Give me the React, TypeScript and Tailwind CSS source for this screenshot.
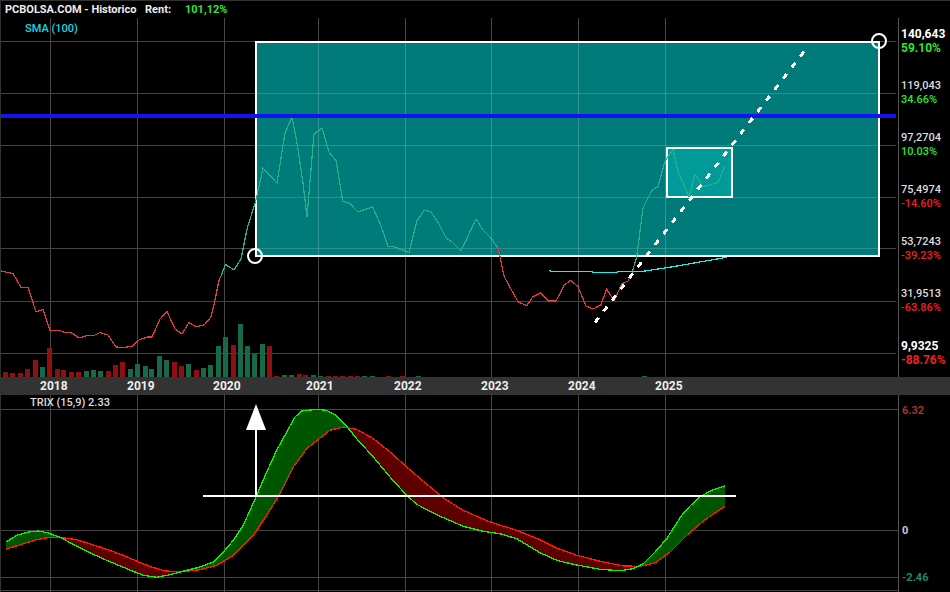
/* Monthly price chart with TRIX panel, drawn on two SVG canvases beside flow-laid axis columns. */

type Pt = readonly [number, number];

const GRID_X = [50, 137, 224, 318, 405, 491, 578, 665];
const GRID_Y = [41, 93, 145, 197, 248, 301, 353];
const TRIX_GRID_Y = [409, 530, 577, 590];

const RED_BEFORE: Pt[] = [
  [1, 271], [13, 273.5], [21, 287.5], [28, 287.5], [36, 312], [43, 309.5], [50, 330.5], [60, 330.5],
  [63, 332], [72, 333], [79, 338], [87, 335.5], [94, 335.5], [100, 332.5], [108, 335], [116, 347],
  [123, 347.5], [132, 346.5], [139, 340], [147, 337], [152, 337], [160, 319], [167, 311.5], [175, 329],
  [182, 334], [189, 322.5], [196, 327], [204, 325], [211, 317], [215, 300], [219, 280],
];
const GREEN_A: Pt[] = [
  [219, 280], [221, 276], [225.5, 264.5], [234, 270], [241, 259], [247, 229], [256, 200], [263, 168],
  [277, 183], [285, 133], [292, 117], [297, 143], [303, 183], [307, 217], [314, 134], [322, 128],
  [329, 152], [336, 160.5], [342.7, 201], [350, 203.7], [358, 212], [372.7, 207], [380.7, 225],
  [388, 246.7], [394, 246.7], [409, 252.7], [417, 220.7], [424.3, 210.3], [430.7, 211.7], [439, 224],
  [446, 238], [452, 242], [461, 251], [476, 219], [483, 230], [490, 237], [498, 248],
];
const RED_MIDDLE: Pt[] = [
  [498, 248], [500, 256.7], [503.7, 275], [506, 280], [518, 301.7], [526.7, 305.7], [533, 296.7],
  [540.7, 293], [548.7, 301], [556, 301], [564.3, 285], [570.7, 280.3], [578, 286.7], [586, 306],
  [593, 309], [600.7, 305], [606.7, 289], [614, 301], [621.7, 284], [628, 281], [632, 273],
];
const GREEN_B: Pt[] = [
  [632, 273], [636.7, 256.7], [639.3, 236.7], [643, 208], [647, 200], [651.7, 190.5], [658, 186.7],
  [665, 161], [673, 149.5], [678, 171.7], [689, 196.7], [695, 174.3], [702.7, 186.7], [718, 182.7], [725, 166],
];
const SMA: Pt[] = [
  [549.3, 270], [550.7, 271.3], [592, 271.3], [593, 272.7], [617, 272.3], [617.7, 271.3], [643, 271.3],
  [673, 266.7], [726.7, 257.3],
];

// [left, top, isGreen] of each 5px volume bar, baseline at y=377
const BARS: readonly (readonly [number, number, boolean])[] = [
  [3, 372, false], [10, 373, false], [18, 373, false], [25, 369, false], [33, 360, false], [40, 367, true],
  [47, 348, false], [55, 369, false], [61, 370, false], [69, 372, false], [76, 372, false], [84, 371, true],
  [91, 370, true], [98, 371, true], [106, 371, false], [113, 365, false], [120, 362, false], [128, 369, true],
  [135, 364, true], [143, 366, true], [149, 369, true], [157, 356, true], [164, 360, true], [172, 362, false],
  [179, 366, false], [186, 364, true], [194, 370, false], [201, 368, true], [208, 365, true], [216, 346, true],
  [223, 337, true], [231, 345, false], [238, 324, true], [245, 346, true], [252, 354, true], [260, 344, true],
  [267, 346, false], [274, 376, false], [282, 375, true], [289, 375, true], [297, 374, false], [303, 375, false],
  [311, 375, true], [318, 376, true], [326, 376, false], [333, 376, false], [340, 376, false], [348, 376, false],
  [355, 376, false], [362, 376, true], [370, 376, true], [386, 376, false], [400, 376, false], [416, 376, true],
  [642, 376, true],
];

const TRIX_GREEN: Pt[] = [
  [6, 542], [16.7, 535.3], [28.3, 532], [38.3, 531], [48.3, 533], [60, 537.3], [73.3, 544.3], [86.7, 551.3],
  [106.7, 560.3], [126.7, 568.7], [143.3, 575.3], [156.7, 577.3], [170, 574.7], [186.7, 570.3], [200, 567],
  [213.3, 562], [223.3, 552], [233.3, 540.3], [243.3, 525.3], [256.7, 495.3], [266.7, 472], [276.7, 450.3],
  [286.7, 432], [295, 417], [301.7, 411], [316.7, 409.3], [326.7, 410.3], [335, 414.7], [346.7, 426.3],
  [356.7, 438.7], [373.3, 457], [390, 477], [406.7, 495.3], [416.7, 504.3], [436.7, 514.7], [463.3, 526.3],
  [483.3, 531.3], [500, 533.7], [516.7, 538.7], [540, 552.7], [556.7, 560.3], [573.3, 564.3], [600, 569.3],
  [620, 570.7], [633.3, 568.7], [643.3, 563.7], [655, 552], [666.7, 538.7], [681.7, 515.3], [690, 506],
  [700, 497], [710, 491], [725, 485.7],
];
const TRIX_RED: Pt[] = [
  [6, 549.3], [20, 544.7], [36.7, 539.7], [50, 537.3], [60, 537.3], [76.7, 539.7], [100, 547], [123.3, 555.3],
  [146.7, 565.3], [163.3, 570.7], [180, 572], [200, 569.7], [216.7, 565.3], [233.3, 555.3], [253.3, 535.3],
  [266.7, 515.3], [280, 493.7], [293.3, 467], [306.7, 448.7], [318.3, 439.3], [330, 430.3], [343.3, 427],
  [356.7, 429.3], [373.3, 438.7], [390, 452], [406.7, 467], [423.3, 481.3], [443.3, 498], [463.3, 510.3],
  [490, 522], [516.7, 530.3], [540, 539.7], [556.7, 548], [576.7, 555.3], [600, 561.3], [623.3, 566],
  [640, 566.3], [655, 563], [670, 552], [686.7, 535.3], [703.3, 521], [725, 506],
];

const PRICE_LEVELS = [
  { value: "140,643", pct: "59.10%", up: true, strong: true },
  { value: "119,043", pct: "34.66%", up: true, strong: false },
  { value: "97,2704", pct: "10.03%", up: true, strong: false },
  { value: "75,4974", pct: "-14.60%", up: false, strong: false },
  { value: "53,7243", pct: "-39.23%", up: false, strong: false },
  { value: "31,9513", pct: "-63.86%", up: false, strong: false },
  { value: "9,9325", pct: "-88.76%", up: false, strong: true },
];

const toPoints = (pts: readonly Pt[]) => pts.map(([x, y]) => `${x},${y}`).join(" ");

function valueAt(pts: readonly Pt[], x: number): number {
  for (let i = 1; i < pts.length; i++) {
    if (x <= pts[i][0]) {
      const [x0, y0] = pts[i - 1];
      const [x1, y1] = pts[i];
      return y0 + ((y1 - y0) * (x - x0)) / (x1 - x0);
    }
  }
  return pts[pts.length - 1][1];
}

// Split the band between both TRIX lines into runs, by which line is on top
function trixBands() {
  const bands: { up: boolean; points: string }[] = [];
  let top: Pt[] = [];
  let bottom: Pt[] = [];
  let up = true;
  const flush = () => {
    if (top.length > 1) bands.push({ up, points: toPoints([...top, ...bottom.reverse()]) });
  };
  for (let x = 6; x <= 725; x++) {
    const g = valueAt(TRIX_GREEN, x);
    const r = valueAt(TRIX_RED, x);
    const nowUp = g <= r;
    if (nowUp !== up && top.length > 0) {
      top.push([x, g]);
      bottom.push([x, r]);
      flush();
      top = [];
      bottom = [];
    }
    up = nowUp;
    top.push([x, g]);
    bottom.push([x, r]);
  }
  flush();
  return bands;
}

function PriceCanvas() {
  return (
    <svg width={897} height={359} viewBox="1 18 897 359" className="absolute inset-0 block">
      {GRID_X.map((x) => (
        <line key={x} x1={x + 0.5} x2={x + 0.5} y1={18} y2={377} stroke="#484848" />
      ))}
      {GRID_Y.map((y) => (
        <line key={y} x1={1} x2={896} y1={y + 0.5} y2={y + 0.5} stroke="#444444" />
      ))}
      {BARS.map(([x, top, green]) => (
        <rect key={x} x={x} y={top} width={5} height={377 - top} fill={green ? "#17694a" : "#8f1010"} />
      ))}

      <rect x={256} y={42} width={623} height={214} fill="#007b79" stroke="#ffffff" strokeWidth={2} shapeRendering="crispEdges" />
      {GRID_X.slice(3).map((x) => (
        <line key={x} x1={x + 0.5} x2={x + 0.5} y1={43} y2={255} stroke="#ffffff" strokeOpacity={0.2} />
      ))}
      {GRID_Y.slice(1, 5).map((y) => (
        <line key={y} x1={257} x2={878} y1={y + 0.5} y2={y + 0.5} stroke="#ffffff" strokeOpacity={0.16} />
      ))}
      <rect x={667} y={148} width={65} height={49} fill="#009a98" stroke="#ffffff" strokeWidth={2} shapeRendering="crispEdges" />

      <polyline points={toPoints(RED_BEFORE)} fill="none" stroke="#e03c3c" strokeWidth={1.2} shapeRendering="crispEdges" />
      <polyline points={toPoints(RED_MIDDLE)} fill="none" stroke="#e03c3c" strokeWidth={1.2} shapeRendering="crispEdges" />
      <polyline points={toPoints(GREEN_A)} fill="none" stroke="#2bb08e" strokeWidth={1.2} shapeRendering="crispEdges" />
      <polyline points={toPoints(GREEN_B)} fill="none" stroke="#2bb08e" strokeWidth={1.2} shapeRendering="crispEdges" />
      <polyline points={toPoints(SMA)} fill="none" stroke="#19f0f0" strokeWidth={1.2} shapeRendering="crispEdges" />

      <rect x={1} y={114} width={895} height={4} fill="#1414f0" />
      <line x1={595} y1={322.5} x2={804.5} y2={51} stroke="#ffffff" strokeWidth={3} strokeDasharray="6 8" shapeRendering="crispEdges" />
      <circle cx={879} cy={41} r={7} fill="none" stroke="#ffffff" strokeWidth={2} />
      <circle cx={255} cy={256} r={7} fill="none" stroke="#ffffff" strokeWidth={2} />
    </svg>
  );
}

function TrixCanvas() {
  return (
    <svg width={897} height={197} viewBox="1 395 897 197" className="absolute inset-0 block">
      {GRID_X.map((x) => (
        <line key={x} x1={x + 0.5} x2={x + 0.5} y1={395} y2={592} stroke="#484848" />
      ))}
      {TRIX_GRID_Y.map((y) => (
        <line key={y} x1={1} x2={898} y1={y + 0.5} y2={y + 0.5} stroke="#444444" />
      ))}
      {trixBands().map((band, i) => (
        <polygon key={i} points={band.points} fill={band.up ? "#005500" : "#5c0000"} />
      ))}
      <polyline points={toPoints(TRIX_RED)} fill="none" stroke="#ff1a00" strokeWidth={1.3} shapeRendering="crispEdges" />
      <polyline points={toPoints(TRIX_GREEN)} fill="none" stroke="#14f000" strokeWidth={1.3} shapeRendering="crispEdges" />
      <rect x={203} y={495} width={533} height={2} fill="#ffffff" />
      <rect x={255} y={429} width={2} height={66} fill="#ffffff" />
      <polygon points="256,404 246,430 266,430" fill="#ffffff" />
    </svg>
  );
}

export default function App() {
  return (
    <div className="flex h-[592px] w-[950px] flex-col overflow-hidden border-t border-l border-[#333333] bg-black font-['Roboto',sans-serif] text-[11px] leading-[14px] text-[#e8e8e8]">
      <header className="flex h-[17px] shrink-0 items-center pl-[4px] font-bold">
        <span className="w-[140px] text-[#eeeeee]">PCBOLSA.COM - Historico</span>
        <span className="w-[40px] text-[#eeeeee]">Rent:</span>
        <span className="text-[#2ee62e]">101,12%</span>
      </header>

      <section className="flex h-[359px] shrink-0">
        <div className="relative w-[897px]">
          <PriceCanvas />
          <span className="absolute top-[4px] left-[24px] font-medium text-[#14d8e0]">SMA (100)</span>
        </div>
        <div className="flex flex-1 flex-col border-l border-[#555555] pt-[9px] pl-[2px]">
          {PRICE_LEVELS.map((level) => (
            <div key={level.value} className={`h-[52px] shrink-0 ${level.strong ? "text-[12px] font-bold" : "font-medium"}`}>
              <div className={level.strong ? "text-white" : "text-[#dddddd]"}>{level.value}</div>
              <div className={level.up ? "text-[#2ee62e]" : "text-[#f02020]"}>{level.pct}</div>
            </div>
          ))}
        </div>
      </section>

      <div className="relative flex h-[18px] shrink-0 items-center bg-[#333333] pl-[39px] text-[12px] font-bold text-[#eeeeee]">
        <span className="w-[87px]">2018</span>
        <span className="w-[86px]">2019</span>
        <span className="w-[93px]">2020</span>
        <span className="w-[88px]">2021</span>
        <span className="w-[87px]">2022</span>
        <span className="w-[87px]">2023</span>
        <span className="w-[87px]">2024</span>
        <span>2025</span>
      </div>

      <section className="flex flex-1">
        <div className="relative w-[897px]">
          <TrixCanvas />
          <span className="absolute top-[1px] left-[29px] font-medium text-[#dddddd]">TRIX (15,9) 2.33</span>
        </div>
        <div className="flex flex-1 flex-col border-l border-[#555555] pt-[9px] pl-[3px] font-bold">
          <div className="h-[120px] text-[#a83232]">6.32</div>
          <div className="h-[47px] text-[#cccccc]">0</div>
          <div className="text-[#1e8a6a]">-2.46</div>
        </div>
      </section>
    </div>
  );
}
